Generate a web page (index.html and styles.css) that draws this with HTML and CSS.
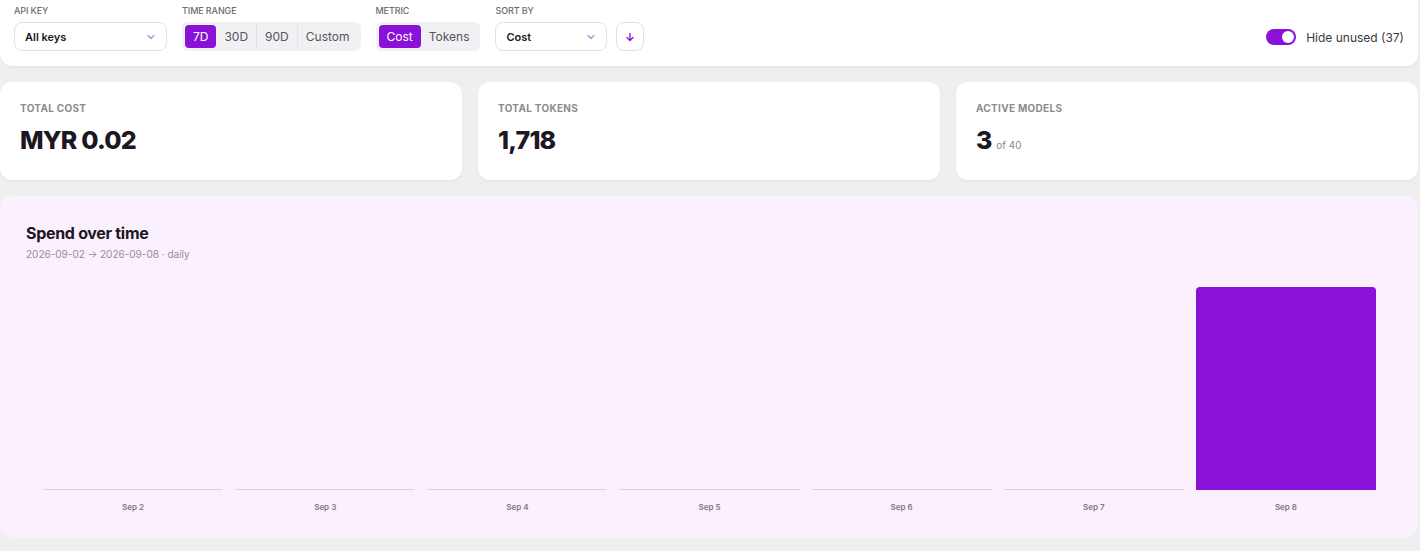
FILE: index.html
```html
<!DOCTYPE html>
<html lang="en">
<head>
    <meta charset="UTF-8">
    <title>Usage</title>
    <link rel="stylesheet" href="styles.css">
</head>
<body>
    <div class="page">
        <!-- Filters -->
        <div class="toolbar">
            <div class="group">
                <div class="label">API KEY</div>
                <div class="select select-key">
                    <span>All keys</span>
                    <svg class="chev" viewBox="0 0 12 12"><path d="M3 4.5l3 3 3-3" /></svg>
                </div>
            </div>
            <div class="group">
                <div class="label">TIME RANGE</div>
                <div class="segment">
                    <span class="seg active">7D</span>
                    <span class="seg">30D</span>
                    <span class="seg">90D</span>
                    <span class="seg">Custom</span>
                </div>
            </div>
            <div class="group">
                <div class="label">METRIC</div>
                <div class="segment">
                    <span class="seg active">Cost</span>
                    <span class="seg plain">Tokens</span>
                </div>
            </div>
            <div class="group">
                <div class="label">SORT BY</div>
                <div class="row">
                    <div class="select select-sort">
                        <span>Cost</span>
                        <svg class="chev" viewBox="0 0 12 12"><path d="M3 4.5l3 3 3-3" /></svg>
                    </div>
                    <div class="icon-btn">
                        <svg viewBox="0 0 12 12"><path d="M6 2.5v7M3 6.5l3 3 3-3" /></svg>
                    </div>
                </div>
            </div>
            <div class="toggle-wrap">
                <span class="toggle"><span class="knob"></span></span>
                <span class="toggle-text">Hide unused (37)</span>
            </div>
        </div>

        <!-- Stats -->
        <div class="stats">
            <div class="card">
                <div class="stat-label">TOTAL COST</div>
                <div class="stat-value">MYR 0.02</div>
            </div>
            <div class="card">
                <div class="stat-label">TOTAL TOKENS</div>
                <div class="stat-value">1,718</div>
            </div>
            <div class="card">
                <div class="stat-label">ACTIVE MODELS</div>
                <div class="stat-value">3 <span class="stat-sub">of 40</span></div>
            </div>
        </div>

        <!-- Chart -->
        <div class="chart-panel">
            <div class="chart-title">Spend over time</div>
            <div class="chart-sub">2026-09-02 → 2026-09-08 · daily</div>
            <div class="plot">
                <div class="col"><div class="bar empty"></div></div>
                <div class="col"><div class="bar empty"></div></div>
                <div class="col"><div class="bar empty"></div></div>
                <div class="col"><div class="bar empty"></div></div>
                <div class="col"><div class="bar empty"></div></div>
                <div class="col"><div class="bar empty"></div></div>
                <div class="col"><div class="bar" style="height: 100%"></div></div>
            </div>
            <div class="axis">
                <span>Sep 2</span>
                <span>Sep 3</span>
                <span>Sep 4</span>
                <span>Sep 5</span>
                <span>Sep 6</span>
                <span>Sep 7</span>
                <span>Sep 8</span>
            </div>
        </div>
    </div>
</body>
</html>
```

FILE: styles.css
```css
* {
    box-sizing: border-box;
}

body {
    margin: 0;
    background-color: #efefef;
    font-family: 'Inter', 'DejaVu Sans', sans-serif;
    color: #1c1722;
}

.page {
    display: flex;
    flex-direction: column;
    gap: 16px;
    padding-right: 2px;
}

/* Toolbar */
.toolbar {
    display: flex;
    align-items: flex-end;
    gap: 15px;
    height: 66px;
    padding: 6px 14px 15px 14px;
    background-color: #ffffff;
    border-radius: 0 0 12px 12px;
    box-shadow: 0 1px 3px rgba(0, 0, 0, 0.05);
}

.group {
    display: flex;
    flex-direction: column;
    gap: 6px;
}

.label {
    font-size: 9px;
    font-weight: 500;
    color: #6b6b70;
    letter-spacing: -0.1px;
}

.row {
    display: flex;
    gap: 9px;
}

.select {
    display: flex;
    align-items: center;
    justify-content: space-between;
    height: 29px;
    padding: 0 9px 0 10px;
    border: 1px solid #e6dcef;
    border-radius: 8px;
    font-size: 11px;
    font-weight: 600;
    color: #1c1722;
}

.select-key {
    width: 153px;
}

.select-sort {
    width: 112px;
}

.chev {
    width: 12px;
    height: 12px;
    fill: none;
    stroke: #b48ad9;
    stroke-width: 1.3;
    stroke-linecap: round;
    stroke-linejoin: round;
}

.icon-btn {
    display: flex;
    align-items: center;
    justify-content: center;
    width: 28px;
    height: 29px;
    border: 1px solid #e6dcef;
    border-radius: 8px;
}

.icon-btn svg {
    width: 12px;
    height: 12px;
    fill: none;
    stroke: #8a14d6;
    stroke-width: 1.3;
    stroke-linecap: round;
    stroke-linejoin: round;
}

.segment {
    display: flex;
    height: 29px;
    padding: 3px;
    background-color: #f1f0f3;
    border-radius: 6px;
}

.seg {
    display: flex;
    align-items: center;
    padding: 0 8px;
    font-size: 12px;
    color: #57535c;
    border-left: 1px solid #e3e1e6;
}

.seg:first-child,
.seg.active + .seg {
    border-left: none;
}

.seg.active {
    background-color: #8a12d8;
    color: #ffffff;
    border-radius: 4px;
}

.toggle-wrap {
    display: flex;
    align-items: center;
    gap: 10px;
    margin-left: auto;
    margin-bottom: 6px;
}

.toggle {
    display: flex;
    align-items: center;
    justify-content: flex-end;
    width: 30px;
    height: 16px;
    padding: 2px;
    background-color: #8a12d8;
    border-radius: 8px;
}

.knob {
    width: 12px;
    height: 12px;
    background-color: #ffffff;
    border-radius: 50%;
}

.toggle-text {
    font-size: 12px;
    color: #3b3740;
}

/* Stat cards */
.stats {
    display: grid;
    grid-template-columns: repeat(3, 1fr);
    gap: 16px;
}

.card {
    height: 98px;
    padding: 20px 20px;
    background-color: #ffffff;
    border-radius: 12px;
    box-shadow: 0 1px 3px rgba(0, 0, 0, 0.05);
}

.stat-label {
    font-size: 10px;
    font-weight: 700;
    color: #8b8b8f;
    letter-spacing: 0.3px;
}

.stat-value {
    margin-top: 11px;
    font-size: 25px;
    font-weight: 800;
    letter-spacing: -0.8px;
    color: #1c1722;
}

.stat-sub {
    font-size: 10px;
    font-weight: 400;
    letter-spacing: 0;
    color: #8b8b8f;
}

/* Chart */
.chart-panel {
    height: 341px;
    padding: 27px 26px 0 26px;
    background-color: #fbf0fd;
    border-radius: 12px;
}

.chart-title {
    font-size: 16px;
    font-weight: 700;
    letter-spacing: -0.3px;
    color: #1c1722;
}

.chart-sub {
    margin-top: 5px;
    font-size: 10px;
    color: #958e9a;
}

.plot {
    display: flex;
    align-items: flex-end;
    gap: 12px;
    height: 203px;
    margin: 27px 16px 0 17px;
}

.col {
    flex: 1;
    height: 100%;
    display: flex;
    align-items: flex-end;
}

.bar {
    width: 100%;
    background-color: #8a12d8;
    border-radius: 4px 4px 0 0;
}

.bar.empty {
    height: 1px;
    background-color: #dccdea;
    border-radius: 1px;
}

.axis {
    display: flex;
    gap: 12px;
    margin: 12px 16px 0 17px;
}

.axis span {
    flex: 1;
    text-align: center;
    font-size: 8px;
    font-weight: 600;
    color: #7d7882;
}
```
